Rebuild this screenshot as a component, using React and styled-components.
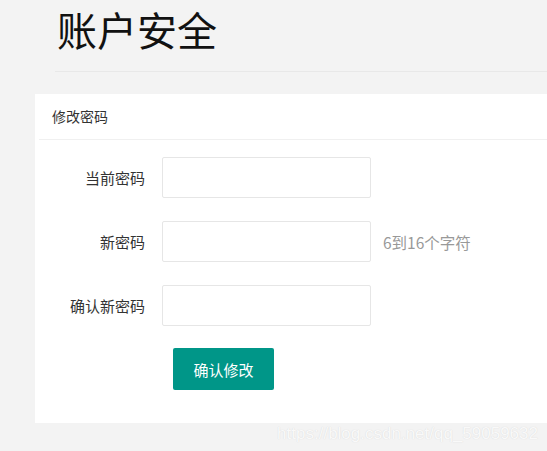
import styled, { createGlobalStyle } from "styled-components";

const GlobalStyle = createGlobalStyle`
  html, body {
    margin: 0;
    padding: 0;
    background: #f3f3f3;
    font-family: "Noto Sans CJK SC", "Noto Sans", sans-serif;
    color: #333;
  }
  * { box-sizing: border-box; }
`;

const campos = [
  { label: "当前密码" },
  { label: "新密码", dica: "6到16个字符" },
  { label: "确认新密码" },
];

const App = () => {
  return (
    <>
      <GlobalStyle />
      <Page>
        <Header>
          <Title>账户安全</Title>
        </Header>

        <Card>
          <CardHeader>修改密码</CardHeader>
          <CardBody>
            {campos.map((campo) => (
              <Row key={campo.label}>
                <Label>{campo.label}</Label>
                <Input type="password" />
                {campo.dica && <Hint>{campo.dica}</Hint>}
              </Row>
            ))}
            <Actions>
              <Button type="button">确认修改</Button>
            </Actions>
          </CardBody>
        </Card>

        <Watermark>https://blog.csdn.net/qq_59059632</Watermark>
      </Page>
    </>
  );
};

const Page = styled.div`
  width: 100%;
  height: 451px;
  overflow: hidden;
`;

const Header = styled.div`
  margin-left: 55px;
  height: 72px;
  border-bottom: 1px solid #e8e8e8;
  padding-top: 7px;
`;

const Title = styled.h1`
  margin: 0 0 0 2px;
  font-size: 40px;
  line-height: 44px;
  font-weight: 400;
  color: #111;
`;

const Card = styled.div`
  margin: 22px 0 0 35px;
  background: #fff;
`;

const CardHeader = styled.div`
  height: 46px;
  line-height: 45px;
  padding-left: 17px;
  font-size: 14px;
  color: #333;
  border-bottom: 1px solid #f0f0f0;
  margin-left: 4px;
  text-indent: -4px;
`;

const CardBody = styled.div`
  padding: 17px 0 33px;
  display: flex;
  flex-direction: column;
  gap: 23px;
`;

const Row = styled.div`
  display: flex;
  align-items: center;
  height: 41px;
`;

const Label = styled.label`
  width: 127px;
  padding-right: 17px;
  text-align: right;
  font-size: 15px;
  color: #333;
`;

const Input = styled.input`
  width: 209px;
  height: 41px;
  border: 1px solid #e6e6e6;
  border-radius: 2px;
  outline: none;
  padding: 0 10px;
  background: #fff;
`;

const Hint = styled.span`
  margin-left: 12px;
  font-size: 15.5px;
  color: #999;
`;

const Actions = styled.div`
  padding-left: 138px;
  margin-top: -1px;
`;

const Button = styled.button`
  width: 101px;
  height: 42px;
  border: none;
  border-radius: 2px;
  background: #009688;
  color: #fff;
  font-family: inherit;
  font-size: 15px;
  cursor: pointer;
`;

const Watermark = styled.div`
  text-align: right;
  padding-right: 9px;
  margin-top: 1px;
  font-family: "Liberation Sans", Arial, sans-serif;
  font-size: 17px;
  color: #f9f9f9;
  text-shadow: 0 0 1px #d4d4d4;
`;

export default App;
